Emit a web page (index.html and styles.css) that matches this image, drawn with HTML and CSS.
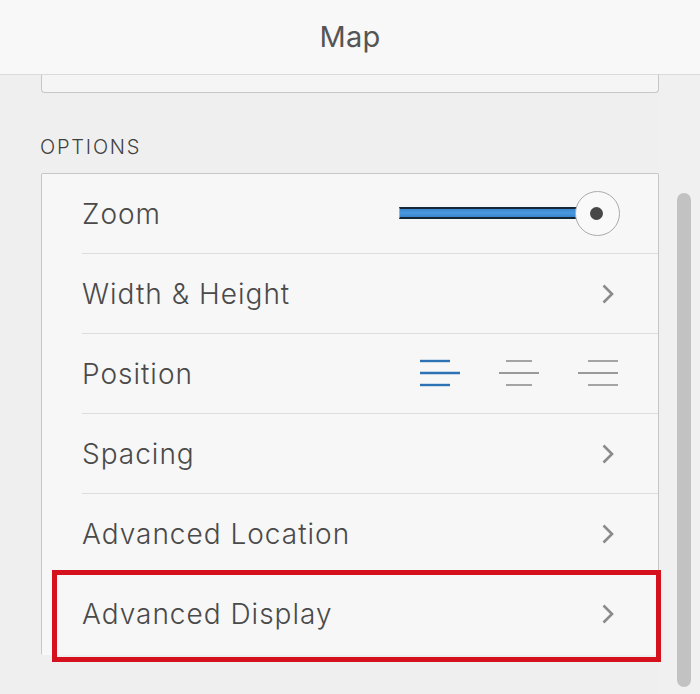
FILE: index.html
```html
<!DOCTYPE html>
<html lang="en">
<head>
<meta charset="utf-8">
<title>Map</title>
<link rel="stylesheet" href="styles.css">
</head>
<body>
<header class="header">Map</header>
<div class="main">
  <div class="content">
    <div class="prev-card"></div>
    <div class="section-label">OPTIONS</div>
    <div class="card">
      <div class="row">
        <span class="label">Zoom</span>
        <div class="slider">
          <div class="track"></div>
          <div class="knob"><span class="dot"></span></div>
        </div>
      </div>
      <div class="row">
        <span class="label">Width &amp; Height</span>
        <svg class="chevron" viewBox="0 0 14 22" width="14" height="22"><path d="M2.5 2.5 L11 11 L2.5 19.5" fill="none" stroke="#8a8a8a" stroke-width="2.6"/></svg>
      </div>
      <div class="row">
        <span class="label">Position</span>
        <div class="align-group">
          <svg class="align-icon" viewBox="0 0 42 28" width="42" height="28"><g stroke="#2e72b6" stroke-width="2.4"><path d="M1 2 H31"/><path d="M1 14 H41"/><path d="M1 26 H31"/></g></svg>
          <svg class="align-icon" viewBox="0 0 42 28" width="42" height="28"><g stroke="#9a9a9a" stroke-width="1.8"><path d="M8 2 H34"/><path d="M1 14 H41"/><path d="M8 26 H34"/></g></svg>
          <svg class="align-icon" viewBox="0 0 42 28" width="42" height="28"><g stroke="#9a9a9a" stroke-width="1.8"><path d="M11 2 H41"/><path d="M1 14 H41"/><path d="M11 26 H41"/></g></svg>
        </div>
      </div>
      <div class="row">
        <span class="label">Spacing</span>
        <svg class="chevron" viewBox="0 0 14 22" width="14" height="22"><path d="M2.5 2.5 L11 11 L2.5 19.5" fill="none" stroke="#8a8a8a" stroke-width="2.6"/></svg>
      </div>
      <div class="row">
        <span class="label">Advanced Location</span>
        <svg class="chevron" viewBox="0 0 14 22" width="14" height="22"><path d="M2.5 2.5 L11 11 L2.5 19.5" fill="none" stroke="#8a8a8a" stroke-width="2.6"/></svg>
      </div>
      <div class="row row-last">
        <span class="label">Advanced Display</span>
        <svg class="chevron" viewBox="0 0 14 22" width="14" height="22"><path d="M2.5 2.5 L11 11 L2.5 19.5" fill="none" stroke="#8a8a8a" stroke-width="2.6"/></svg>
      </div>
      <div class="highlight"></div>
    </div>
  </div>
  <div class="scroll">
    <div class="thumb"></div>
  </div>
</div>
</body>
</html>
```
FILE: styles.css
```css
* { box-sizing: border-box; }

html, body {
  margin: 0;
  height: 694px;
  overflow: hidden;
}

body {
  background: #efefef;
  font-family: "Inter", "Liberation Sans", sans-serif;
  color: #4a4a4a;
}

.header {
  height: 75px;
  border-bottom: 1px solid #dadada;
  background: #f8f8f8;
  display: flex;
  align-items: center;
  justify-content: center;
  font-size: 29px;
  font-weight: 400;
  letter-spacing: 0.3px;
  color: #555;
  padding-bottom: 1px;
}

.main {
  display: flex;
  height: 619px;
  overflow: hidden;
}

.content {
  width: 659px;
  padding-left: 41px;
  flex: none;
}

.prev-card {
  height: 18px;
  background: #f5f5f5;
  border: 1px solid #c6c6c6;
  border-top: none;
  border-radius: 0 0 4px 4px;
}

.section-label {
  margin-top: 42px;
  margin-left: -1px;
  margin-bottom: 14px;
  font-size: 20px;
  line-height: 24px;
  font-weight: 300;
  letter-spacing: 1.8px;
  color: #3f3f3f;
}

.card {
  position: relative;
  background: #f7f7f7;
  border: 1px solid #c6c6c6;
  border-bottom-color: transparent;
  border-radius: 2px;
}

.row {
  display: flex;
  align-items: center;
  justify-content: space-between;
  height: 80px;
  margin-left: 40px;
  padding-right: 39px;
  border-bottom: 1px solid #dddddd;
}

.row-last {
  border-bottom: none;
}

.label {
  font-size: 28px;
  font-weight: 300;
  letter-spacing: 1px;
  color: #4a4a4a;
}

.chevron {
  display: block;
  margin-right: 4px;
}

.slider {
  position: relative;
  width: 221px;
  height: 45px;
  margin-right: -1px;
}

.track {
  position: absolute;
  left: 0;
  right: 30px;
  top: 16px;
  height: 12px;
  background: linear-gradient(#3b87cf, #4a98de 50%, #3a84cc);
  border-top: 2px solid #142638;
  border-bottom: 2px solid #142638;
  border-left: 1px solid #8fb6d8;
}

.knob {
  position: absolute;
  right: 0;
  top: 0;
  width: 45px;
  height: 45px;
  border-radius: 50%;
  border: 1px solid #ababab;
  background: #f9f9f9;
  display: flex;
  align-items: center;
  justify-content: center;
}

.dot {
  width: 13px;
  height: 13px;
  border-radius: 50%;
  background: #474747;
  margin-left: -2px;
}

.align-group {
  display: flex;
  gap: 37px;
  margin-top: -2px;
}

.align-icon {
  display: block;
}

.highlight {
  position: absolute;
  left: 10px;
  right: -3px;
  top: 396px;
  height: 92px;
  border: 5px solid #d4111c;
  pointer-events: none;
}

.scroll {
  flex: 1;
  padding-left: 18px;
  background: #f0f0f0;
}

.thumb {
  width: 14px;
  height: 494px;
  margin-top: 118px;
  border-radius: 7px;
  background: #c2c2c2;
}
```
